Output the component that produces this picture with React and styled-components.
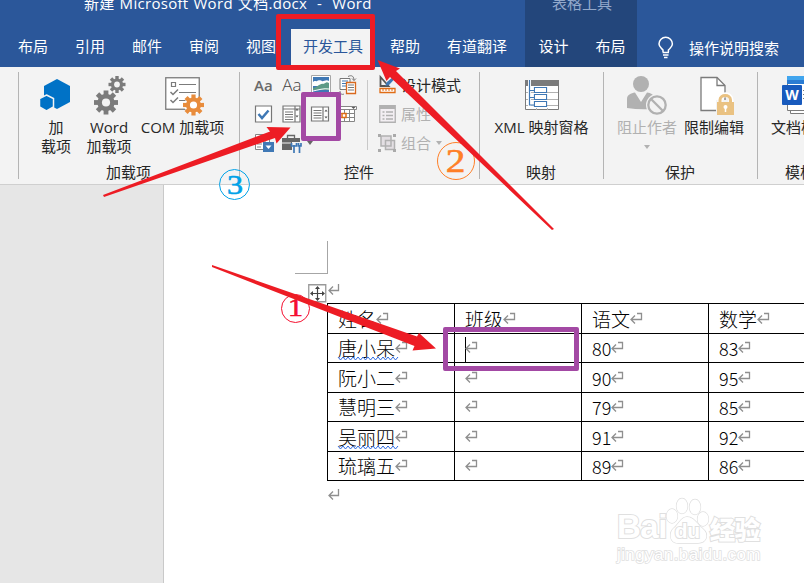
import React from "react";
import styled, { createGlobalStyle, css } from "styled-components";

const GlobalStyle = createGlobalStyle`
  * { box-sizing: border-box; }
  body {
    margin: 0;
    overflow: hidden;
    font-family: "Open Sans", "Noto Sans CJK SC", sans-serif;
    font-size: 15px;
    color: #262626;
  }
  svg { display: block; overflow: visible; }
`;

const Window = styled.div`
  position: relative;
  display: flex;
  flex-direction: column;
  width: 804px;
  height: 583px;
  overflow: hidden;
  white-space: nowrap;
`;

/* ---------- header ---------- */

const Header = styled.header`
  display: flex;
  flex: none;
  height: 67px;
  background: #2b579a;
  color: #fff;
`;

const HeaderPart = styled.div`
  display: flex;
  flex-direction: column;
  flex: none;
  width: ${(p) => p.$width}px;
  background: ${(p) => (p.$context ? "#23467b" : "transparent")};
`;

const Title = styled.div`
  height: 20px;
  margin-top: -7px;
  margin-bottom: 16px;
  line-height: 20px;
  font-size: 15px;
  white-space: pre;
  letter-spacing: ${(p) => (p.$dim ? 0 : 0.3)}px;
  word-spacing: ${(p) => (p.$dim ? 0 : 0.8)}px;
  padding-left: ${(p) => p.$left || 0}px;
  color: ${(p) => (p.$dim ? "#93a9cb" : "#fff")};
`;

const Tabs = styled.nav`
  display: flex;
  height: 38px;
  line-height: 34px;
  padding-left: ${(p) => p.$left || 0}px;
`;

const Tab = styled.div`
  padding: 0 13.5px;
  ${(p) =>
    p.$active &&
    css`
      margin: 0 1.5px;
      padding: 0 12px;
      background: #f3f3f3;
      color: #2b579a;
    `}
`;

const TellMe = styled.div`
  display: flex;
  align-items: center;
  gap: 16px;
  height: 38px;
  margin-top: 29px;
  padding: 0 0 2px 21px;
`;

/* ---------- ribbon ---------- */

const Ribbon = styled.div`
  display: flex;
  flex: none;
  height: 118px;
  padding: 5px 0 5px 18px;
  background: #f3f3f3;
  border-bottom: 1px solid #cfcfcf;
`;

const Group = styled.section`
  display: flex;
  flex-direction: column;
  justify-content: space-between;
  flex: none;
  width: ${(p) => p.$width}px;
  border-left: 1px solid #b4b4b4;
`;

const GroupBody = styled.div`
  display: flex;
  padding-left: ${(p) => p.$left || 0}px;
`;

const GroupName = styled.div`
  line-height: 18px;
  margin-bottom: -2px;
  padding-right: 1px;
  text-align: center;
`;

const BigButton = styled.div`
  display: flex;
  flex-direction: column;
  align-items: center;
  flex: none;
  width: ${(p) => p.$width}px;
  padding-top: 4px;
  line-height: 19px;
  text-align: center;
  color: ${(p) => (p.$disabled ? "#b1b1b1" : "#262626")};
`;

const BigIcon = styled.div`
  height: 42px;
`;

const IconGrid = styled.div`
  display: grid;
  grid-template-columns: repeat(4, 28.3px);
  grid-template-rows: repeat(3, 29px);
  align-items: center;
  width: 113px;
  height: 87px;
  margin-top: -2px;
`;

const Letters = styled.span`
  font-size: ${(p) => (p.$bold ? 15 : 17)}px;
  font-weight: ${(p) => (p.$bold ? 600 : 300)};
  line-height: 20px;
  color: ${(p) => (p.$bold ? "#6a6a6a" : "#444")};
`;

const WithCaret = styled.div`
  display: flex;
  align-items: center;
  gap: 6px;
`;

const Caret = styled.i`
  flex: none;
  margin-top: ${(p) => p.$drop || 0}px;
  border: 3.5px solid transparent;
  border-top: 4px solid ${(p) => p.$color || "#666"};
  border-bottom: 0;
`;

const SideList = styled.div`
  margin: 8px 0 0;
  height: 70px;
  border-left: 1px solid #c8c8c8;
  padding-left: 11px;
`;

const SideItems = styled.div`
  margin-top: -10px;
`;

const SideItem = styled.div`
  display: flex;
  align-items: center;
  height: 29px;
  gap: 5px;
  color: ${(p) => (p.$disabled ? "#b1b1b1" : "#262626")};
`;

/* ---------- document ---------- */

const Workspace = styled.main`
  display: flex;
  flex: 1;
  background: #e6e6e6;
  padding-left: 163px;
`;

const Page = styled.div`
  flex: 1;
  min-width: 0;
  padding: 56px 0 0 131px;
  border-left: 1px solid #c9c9c9;
  background: #fff;
  overflow: hidden;
`;

const CropMark = styled.div`
  width: 33px;
  height: 33px;
  border: solid #a6a6a6;
  border-width: 0 1px 1px 0;
`;

const AnchorLine = styled.div`
  display: flex;
  align-items: flex-start;
  gap: 1px;
  height: 29px;
  padding: 10px 0 0 13px;
`;

const Table = styled.div`
  display: grid;
  grid-template-columns: repeat(4, 127px);
  grid-template-rows: 30px 29px 30px 29px 30px 29px;
  width: 509px;
  margin-left: 32px;
  border: solid #000;
  border-width: 1px 0 0 1px;
  font-family: "Noto Sans CJK SC", sans-serif;
  font-weight: 300;
  color: #000;
`;

const Cell = styled.div`
  display: flex;
  align-items: center;
  padding-left: 10px;
  border: solid #000;
  border-width: 0 1px 1px 0;
`;

const CellText = styled.span`
  position: relative;
  line-height: 24px;
  font-size: ${(p) => (p.$digits ? 18 : 19)}px;
`;

const Squiggle = styled.svg`
  position: absolute;
  left: 0;
  bottom: -1px;
`;

const TextCursor = styled.i`
  width: 1px;
  height: 25px;
  margin-right: -1px;
  margin-top: 3px;
  background: #000;
`;

const LastMark = styled.div`
  padding: 8px 0 0 33px;
`;

/* ---------- notes drawn over the window ---------- */

const Frame = styled.div`
  position: absolute;
  left: ${(p) => p.$x}px;
  top: ${(p) => p.$y}px;
  width: ${(p) => p.$w}px;
  height: ${(p) => p.$h}px;
  border: 5px solid ${(p) => p.$color};
  border-radius: 2px;
`;

const Step = styled.div`
  position: absolute;
  left: ${(p) => p.$x}px;
  top: ${(p) => p.$y}px;
  width: ${(p) => p.$size}px;
  height: ${(p) => p.$size}px;
  border: 1.7px solid currentColor;
  border-radius: 50%;
  color: ${(p) => p.$color};
  display: flex;
  align-items: center;
  justify-content: center;
  font-family: "Liberation Serif", serif;
  font-size: ${(p) => p.$size * 0.9}px;
  line-height: 1;
  -webkit-text-stroke: 0.6px currentColor;

  span {
    transform: scaleX(1.15);
  }
`;

const Arrows = styled.svg`
  position: absolute;
  left: 0;
  top: 0;
`;

const Watermark = styled.div`
  position: absolute;
  left: 617px;
  top: 495px;
  width: 150px;
  color: #fff;
  font-family: "Liberation Sans", "Noto Sans CJK SC", sans-serif;
  -webkit-text-stroke: 2px #e0e0e0;
  paint-order: stroke fill;
`;

const WatermarkBrand = styled.div`
  display: flex;
  align-items: flex-end;
  height: 50px;
  font-weight: 700;
  font-size: 33px;
  line-height: 36px;
  letter-spacing: -0.5px;
`;

const Paw = styled.div`
  position: relative;
  width: 43px;
  height: 48px;
  margin-left: -1px;
`;

const PawText = styled.span`
  position: absolute;
  left: 9px;
  top: 20px;
  font-size: 21px;
  line-height: 28px;
`;

const BrandSuffix = styled.span`
  font-size: 25.5px;
  font-weight: 900;
  line-height: 30px;
  margin-left: 1px;
`;

const WatermarkUrl = styled.div`
  font-size: 17px;
  line-height: 20px;
  letter-spacing: 0.4px;
  -webkit-text-stroke-width: 1.6px;
`;

/* ---------- icons ---------- */

const gearTeeth = [0, 45, 90, 135, 180, 225, 270, 315];

const Gear = ({ x, y, r, color, hole = "#f3f3f3" }) => (
  <g transform={`translate(${x} ${y})`}>
    {gearTeeth.map((a) => (
      <rect key={a} x={-r * 0.2} y={-r} width={r * 0.4} height={r} fill={color} transform={`rotate(${a})`} />
    ))}
    <circle r={r * 0.72} fill={color} />
    <circle r={r * 0.34} fill={hole} />
  </g>
);

const AddinIcon = () => (
  <svg width="34" height="40">
    <path d="M18 3 31 10V26L18 33 5 26V10Z" fill="#0072c6" />
    <path d="M7.500 19 14.500 22.500V31L7.500 35 .5 31V22.500Z" fill="#0072c6" stroke="#f3f3f3" strokeWidth="1.500" />
  </svg>
);

const WordAddinIcon = () => (
  <svg width="30" height="40">
    <Gear x={23} y={8.500} r={8.500} color="#7b7b7b" />
    <Gear x={12} y={26.500} r={12} color="#7b7b7b" />
  </svg>
);

const ComIcon = () => (
  <svg width="36" height="40">
    <rect x=".75" y="1.750" width="33.500" height="31.500" fill="#fff" stroke="#7b7b7b" strokeWidth="1.300" />
    <g fill="none" stroke="#7b7b7b" strokeWidth="1.200">
      <path d="M6.500 6.500h4v4h-4ZM14 8.500h17M14 16.500h17M14 24.500h8" />
      <path d="m5.500 16 2.500 2.500 5-5M5.500 24 8 26.500l5-5" strokeWidth="1.500" />
    </g>
    <circle cx="28" cy="29" r="9" fill="#fff" />
    <Gear x={28.500} y={29} r={10.500} color="#e88c3c" hole="#fff" />
  </svg>
);

const PictureIcon = () => (
  <svg width="20" height="20">
    <path d="M.5.500h19v18H.500Z" fill="#fff" stroke="#a6a6a6" />
    <path d="M2 2h16v15H2Z" fill="#3f78b5" />
    <path d="M2 7c2-2 3 0 4-1s4-1 5 0 4-2 7 0v5H2Z" fill="#fff" />
    <path d="M2 13c4 0 7-5 10-4 3-1 3-3 6-1v7H2Z" fill="#5d9b86" />
    <path d="M2 16c5-1 11-3 16-2" stroke="#fff" fill="none" />
  </svg>
);

const BlocksIcon = () => (
  <svg width="18" height="20">
    <path d="M1 3.500h10v11H1Z" fill="#fff" stroke="#777" />
    <path d="M3 6h6M3 8.500h5M3 11h4" stroke="#3f78b5" />
    <path d="M7.500 7.500h9v11h-9Z" fill="#fff" stroke="#d9691e" strokeWidth="1.300" />
    <path d="M9 10h6M9 12.500h6M9 15h6" stroke="#777" />
    <path d="M9 1.500c4-2 6 0 6 4m-2-2 2 2 2-2M1 16c0 3 2 4 4 3" fill="none" stroke="#777" />
  </svg>
);

const CheckIcon = () => (
  <svg width="18" height="18">
    <path d="M1.500 1h16v16h-16Z" fill="#fff" stroke="#777" strokeWidth="1.200" />
    <path d="m4.500 9 3.500 4 6.500-7.500" fill="none" stroke="#3f78b5" strokeWidth="2.500" />
  </svg>
);

const ListIcon = ({ combo }) => (
  <svg width="19" height={combo ? 18 : 16}>
    <path d={combo ? "M1 1h17v3H1ZM1 4v13h17V4M13 1v16" : "M.5 1h17v14H.500ZM12 1v14"} fill="#fff" stroke="#777" strokeWidth="1.200" />
    <path d={combo ? "M3 7h8M3 9.500h8M3 12h8M3 14.500h8" : "M2.500 4.500h8M2.500 7h8M2.500 9.500h8M2.500 12h8"} stroke="#777" strokeWidth="1.200" />
    <path d="m13.500 5.500 1.500-2 1.500 2ZM13.500 10.500l1.500 2 1.500-2Z" fill="#555" />
  </svg>
);

const DateIcon = () => (
  <svg width="19" height="18">
    <path d="M.5 1.500h17v3H.500ZM.5 4.500v12h15v-12M.5 8.500h15M.5 12.500h15M5.500 4.500v12M10.500 4.500v12" fill="#fff" stroke="#858585" />
    <path d="m12.500 2 2 2 2-2Z" fill="#555" />
    <path d="M3 8.500h4v4H3Z" fill="#fff" stroke="#e06c15" strokeWidth="1.500" />
  </svg>
);

const DropListIcon = () => (
  <svg width="20" height="18">
    <path d="M1.500.500h14v15h-14ZM1.500 3.500h14M3 7h9M3 10h5M3 13h4" fill="#fff" stroke="#858585" />
    <path d="M9 8h11v10H9Z" fill="#3f78b5" />
    <path d="m11.500 11.500 3 3.500 3-3.500Z" fill="#fff" />
  </svg>
);

const ToolboxIcon = () => (
  <svg width="19" height="18">
    <path d="M5.500 4V1.500h7V4" fill="none" stroke="#666" strokeWidth="1.300" />
    <path d="M0 4h18v4h-8v8H0Z" fill="#666" />
    <path d="M0 9h9" stroke="#f3f3f3" />
    <path d="M12 19v-8m-2.500-2v3h5V9M17.500 19v-8M16.500 9v3h2.500V9" fill="none" stroke="#3f78b5" strokeWidth="1.700" />
  </svg>
);

const DesignIcon = () => (
  <svg width="17" height="18">
    <path d="M1.500 10V1l8 9Z" fill="none" stroke="#555" strokeWidth="1.800" />
    <path d="m6 10 2-4 7-6 1.500 2L10 9Z" fill="#3f78b5" />
    <path d="M1 12.500h15v4H1Z" fill="#fff" stroke="#e06c15" strokeWidth="1.300" />
    <path d="M4 13v2M7 13v2M10 13v2M13 13v2" stroke="#e06c15" />
  </svg>
);

const PropertiesIcon = () => (
  <svg width="17" height="18">
    <path d="M.75.750h15.500v16.500H.750Z" fill="#f3eff3" stroke="#b1b1b1" strokeWidth="1.300" />
    <path d="M1 1h15v3H1Z" fill="#b1b1b1" />
    <path d="M3.500 7h2M7 7h7M3.500 10.500h2M7 10.500h7M3.500 14h2M7 14h7" stroke="#b1b1b1" strokeWidth="1.300" />
  </svg>
);

const CombineIcon = () => (
  <svg width="17" height="18">
    <path d="M2 2h10v10H2ZM6.500 6.500h9v9h-9Z" fill="#e3dfe3" stroke="#b1b1b1" strokeWidth="1.500" />
    <path d="M-1 0h3v3h-3ZM14 0h3v3h-3ZM-1 15h3v3h-3ZM14 15h3v3h-3Z" fill="#aaa" />
  </svg>
);

const XmlIcon = () => (
  <svg width="34" height="40">
    <path d="M.5 4.500h33v29H.500Z" fill="#fff" stroke="#7b7b7b" />
    <path d="M0 4h34v6H0Z" fill="#7b7b7b" />
    <path d="M1 16.500h32M1 23.500h32M1 29.500h32M11.500 32v2M22.500 32v2" stroke="#b1b1b1" />
    <path d="M4.500 4v27H10M4.500 14.500H10M4.500 21.500H10" fill="none" stroke="#fff" strokeWidth="3" />
    <path d="M4.500 4v25H10M4.500 14.500H10M4.500 21.500H10M9.500 11.500h12v5h-12ZM9.500 18.500h12v5h-12ZM9.500 25.500h12v5h-12Z" fill="none" stroke="#3f78b5" strokeWidth="1.200" />
    <path d="M10 12h11v4H10ZM10 19h11v4H10ZM10 26h11v4H10Z" fill="#fff" />
  </svg>
);

const BlockAuthorsIcon = () => (
  <svg width="40" height="40">
    <circle cx="14" cy="8" r="8" fill="#b1b1b1" />
    <path d="M0 32V23c0-4 4-6 8-6.500L14 26l6-9.500c4 .5 6 2 7 4V33Q12 34 0 32Z" fill="#b1b1b1" />
    <circle cx="30" cy="29" r="11" fill="#f3f3f3" />
    <circle cx="30" cy="29" r="8.700" fill="#f3f3f3" stroke="#b1b1b1" strokeWidth="2.300" />
    <path d="m24 23 12 12" stroke="#b1b1b1" strokeWidth="2.300" />
  </svg>
);

const RestrictIcon = () => (
  <svg width="28" height="40">
    <path d="M1 1.500h16l8 8v25H1Z" fill="#fff" stroke="#7b7b7b" strokeWidth="1.300" />
    <path d="M17 1.500v8h8" fill="none" stroke="#7b7b7b" strokeWidth="1.300" />
    <path d="M16 24h18v16H16Z" fill="#f3f3f3" />
    <path d="M20 27v-3c0-7 11-7 11 0v3" fill="none" stroke="#fff" strokeWidth="5" />
    <path d="M20 27v-3c0-6 10.500-6 10.500 0v3" fill="none" stroke="#eac282" strokeWidth="3" />
    <path d="M17 26h17v13H17Z" fill="#eac282" />
    <circle cx="25.500" cy="31" r="2" fill="#fff" />
    <path d="M25.500 31v5" stroke="#fff" strokeWidth="1.500" />
  </svg>
);

const WordTile = styled.div`
  position: absolute;
  left: 0;
  top: 9px;
  width: 20px;
  height: 20px;
  border-radius: 1px;
  background: #185abd;
  color: #fff;
  font-size: 14px;
  font-weight: 700;
  line-height: 20px;
`;

const TemplateBox = styled.div`
  position: relative;
  width: 38px;
`;

const TemplateIcon = () => (
  <TemplateBox>
    <svg width="38" height="40">
      <path d="M8.500 5v32.500H38" fill="#fff" stroke="#7b7b7b" />
      <path d="M5.500 2v32.500H38V2Z" fill="#fff" stroke="#7b7b7b" />
      <path d="M5 0h33v4H5Z" fill="#41a5ee" />
      <path d="M5 4h33v4H5Z" fill="#2b7cd3" />
      <path d="M21 14.500h8M21 18.500h8M21 22.500h8" stroke="#7b7b7b" />
    </svg>
    <WordTile>W</WordTile>
  </TemplateBox>
);

const BulbIcon = () => (
  <svg width="15" height="21" fill="none" stroke="#fff" strokeWidth="1.500">
    <path d="M5 15v-2C3.500 11 1 10 1 7a6.700 6.700 0 0 1 13.400 0c0 3-2.400 4-4 6v2M4.500 15.500h6.500M5 18h5.500M6 20.500h3.500" />
  </svg>
);

const MoveHandle = () => (
  <svg width="19" height="19">
    <path d="M.75.750h17v17H.750Z" fill="#fff" stroke="#999" strokeWidth="1.300" />
    <path d="M9.500 3v13M3 9.500h13" stroke="#444" strokeWidth="1.200" />
    <path d="m7 5 2.500-3L12 5ZM7 14l2.500 3 2.500-3ZM5 7 2 9.500 5 12ZM14 7l3 2.500-3 2.500Z" fill="#444" />
  </svg>
);

const ReturnMark = styled.svg`
  flex: none;
  margin-bottom: ${(p) => p.$lift || 0}px;
`;

const Return = ({ small }) => (
  <ReturnMark $lift={small ? 0 : 2} width="12" height="12" fill="none" stroke="#8f8f8f" strokeWidth="1.300">
    <path d={small ? "M10.500 0v6.500H1.500m3.500-4-4 4 4 4" : "M7 1.500h4.500v6H1m4-4-4 4 4 4"} />
  </ReturnMark>
);

const addins = [
  { icon: <AddinIcon />, lines: ["加", "载项"], width: 50 },
  { icon: <WordAddinIcon />, lines: ["Word", "加载项"], width: 56 },
  { icon: <ComIcon />, lines: ["COM 加载项"], width: 91 },
];

const rows = [
  ["姓名", "班级", "语文", "数学"],
  ["唐小呆", "", "80", "83"],
  ["阮小二", "", "90", "95"],
  ["慧明三", "", "79", "85"],
  ["吴丽四", "", "91", "92"],
  ["琉璃五", "", "89", "86"],
];

const misspelled = ["唐小呆", "吴丽四"];

// zigzag under a misspelled name
const wave = "M0 2" + "l2.500 3l2.500-3".repeat(12);

const TableCell = ({ text, cursor }) => (
  <Cell>
    {cursor && <TextCursor />}
    {text && (
      <CellText $digits={/\d/.test(text)}>
        {text}
        {misspelled.includes(text) && (
          <Squiggle width="60" height="6" fill="none" stroke="#2f6be0">
            <path d={wave} />
          </Squiggle>
        )}
      </CellText>
    )}
    <Return />
  </Cell>
);

const RED = "#ed1c24";
const PURPLE = "#a349a4";

export default function App() {
  return (
    <Window>
      <GlobalStyle />
      <Header>
        <HeaderPart $width={525}>
          <Title $left={84}>{"新建 Microsoft Word 文档.docx  -  Word"}</Title>
          <Tabs $left={4.5}>
            {["布局", "引用", "邮件", "审阅", "视图", "开发工具", "帮助", "有道翻译"].map((t) => (
              <Tab key={t} $active={t === "开发工具"}>{t}</Tab>
            ))}
          </Tabs>
        </HeaderPart>
        <HeaderPart $width={112} $context>
          <Title $dim $left={27}>表格工具</Title>
          <Tabs $left={-1}>
            <Tab>设计</Tab>
            <Tab>布局</Tab>
          </Tabs>
        </HeaderPart>
        <TellMe>
          <BulbIcon />
          操作说明搜索
        </TellMe>
      </Header>

      <Ribbon>
        <Group $width={221}>
          <GroupBody $left={12}>
            {addins.map((a) => (
              <BigButton key={a.lines[0]} $width={a.width}>
                <BigIcon>{a.icon}</BigIcon>
                {a.lines.map((l) => <div key={l}>{l}</div>)}
              </BigButton>
            ))}
          </GroupBody>
          <GroupName>加载项</GroupName>
        </Group>

        <Group $width={240}>
          <GroupBody $left={14}>
            <IconGrid>
              <Letters $bold>Aa</Letters>
              <Letters>Aa</Letters>
              <PictureIcon />
              <BlocksIcon />
              <CheckIcon />
              <ListIcon combo />
              <ListIcon />
              <DateIcon />
              <DropListIcon />
              <WithCaret>
                <ToolboxIcon />
                <Caret />
              </WithCaret>
            </IconGrid>
            <SideList>
              <SideItems>
                <SideItem><DesignIcon />设计模式</SideItem>
                <SideItem $disabled><PropertiesIcon />属性</SideItem>
                <SideItem $disabled><CombineIcon />组合<Caret $color="#b1b1b1" /></SideItem>
              </SideItems>
            </SideList>
          </GroupBody>
          <GroupName>控件</GroupName>
        </Group>

        <Group $width={124}>
          <GroupBody>
            <BigButton $width={123}>
              <BigIcon><XmlIcon /></BigIcon>
              XML 映射窗格
            </BigButton>
          </GroupBody>
          <GroupName>映射</GroupName>
        </Group>

        <Group $width={154}>
          <GroupBody $left={9}>
            <BigButton $width={68} $disabled>
              <BigIcon><BlockAuthorsIcon /></BigIcon>
              阻止作者
              <Caret $color="#b1b1b1" $drop={8} />
            </BigButton>
            <BigButton $width={66}>
              <BigIcon><RestrictIcon /></BigIcon>
              限制编辑
            </BigButton>
          </GroupBody>
          <GroupName>保护</GroupName>
        </Group>

        <Group $width={86}>
          <GroupBody $left={10}>
            <BigButton $width={66}>
              <BigIcon><TemplateIcon /></BigIcon>
              文档模板
            </BigButton>
          </GroupBody>
          <GroupName>模板</GroupName>
        </Group>
      </Ribbon>

      <Workspace>
        <Page>
          <CropMark />
          <AnchorLine>
            <MoveHandle />
            <Return small />
          </AnchorLine>
          <Table>
            {rows.map((row, r) =>
              row.map((text, c) => (
                <TableCell key={`${r}-${c}`} text={text} cursor={r === 1 && c === 1} />
              ))
            )}
          </Table>
          <LastMark><Return small /></LastMark>
        </Page>
      </Workspace>

      <Watermark>
        <WatermarkBrand>
          Bai
          <Paw>
            <svg width="43" height="48" fill="#fff" stroke="#dedede" strokeWidth="1.300">
              <ellipse cx="6" cy="19" rx="5.500" ry="7" />
              <ellipse cx="16" cy="9" rx="5.500" ry="7.500" />
              <ellipse cx="29" cy="10" rx="5.500" ry="7.500" />
              <ellipse cx="37" cy="22" rx="5.500" ry="7" />
              <path d="M21 20c-6 0-8 7-13 11S3 46 12 46h20c9 0 11-9 5-14S28 20 21 20Z" />
            </svg>
            <PawText>du</PawText>
          </Paw>
          <BrandSuffix>经验</BrandSuffix>
        </WatermarkBrand>
        <WatermarkUrl>jingyan.baidu.com</WatermarkUrl>
      </Watermark>

      <Step $x={219} $y={169} $size={31} $color="#00a2e8"><span>3</span></Step>
      <Step $x={437} $y={142} $size={38} $color="#ff7f27"><span>2</span></Step>
      <Step $x={281} $y={294} $size={29} $color="#f5102f"><span>1</span></Step>
      <Frame $x={276} $y={14} $w={99} $h={56} $color={RED} />
      <Frame $x={301} $y={92} $w={40} $h={49} $color={PURPLE} />
      <Frame $x={443} $y={327} $w={136} $h={44} $color={PURPLE} />
      <Arrows width="804" height="583" fill={RED}>
        <path d="M103 195 270 131.500 266.500 127 290.500 127.500 276.500 143.500 275 138 104 197Z" />
        <path d="M377.500 60 400 68.500 396 71 554 229 552 230 390 77 386.500 81Z" />
        <path d="M212 265 417 336.500 419 333 436 348.500 412.500 350.500 414.500 346 212 267Z" />
      </Arrows>
    </Window>
  );
}
